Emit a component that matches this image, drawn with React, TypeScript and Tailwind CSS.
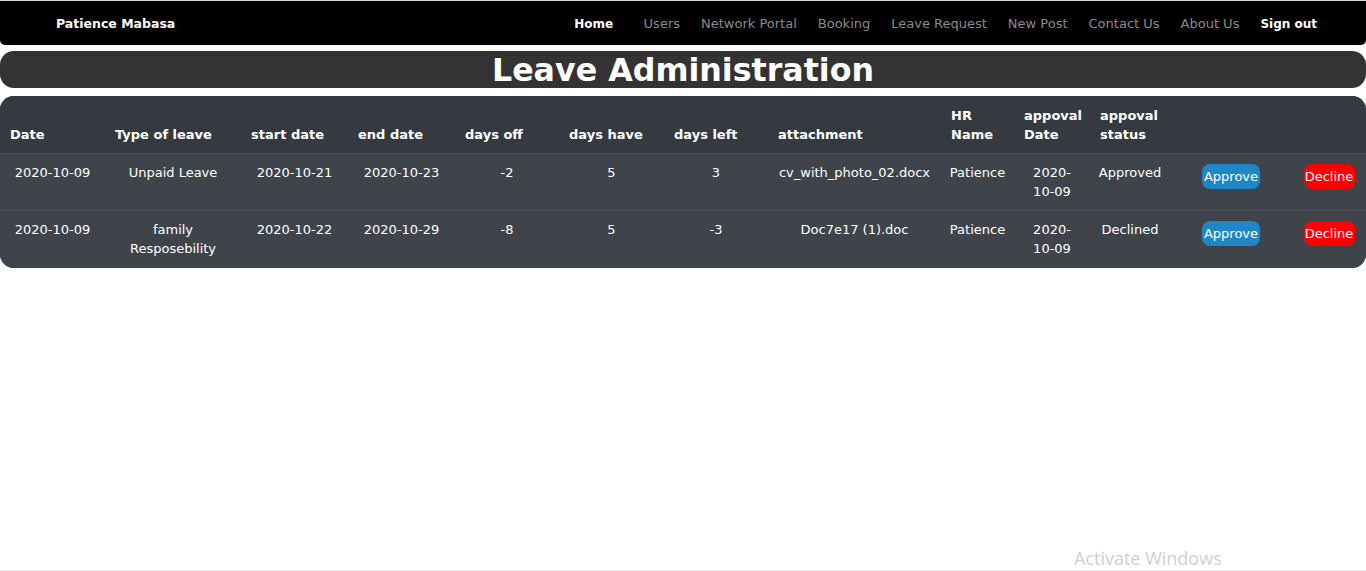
import React from "react";

const rows = [
  {
    date: "2020-10-09",
    type: ["Unpaid Leave"],
    start: "2020-10-21",
    end: "2020-10-23",
    off: "-2",
    have: "5",
    left: "3",
    att: "cv_with_photo_02.docx",
    hr: "Patience",
    status: "Approved",
  },
  {
    date: "2020-10-09",
    type: ["family", "Resposebility"],
    start: "2020-10-22",
    end: "2020-10-29",
    off: "-8",
    have: "5",
    left: "-3",
    att: "Doc7e17 (1).doc",
    hr: "Patience",
    status: "Declined",
  },
];

const widths = [105, 136, 107, 107, 104, 105, 104, 173, 73, 76, 80, 122, 74];

export default function App() {
  const navLinks = ["Users", "Network Portal", "Booking", "Leave Request", "New Post", "Contact Us", "About Us"];
  return (
    <div
      className="relative min-h-[571px] w-[1366px] overflow-hidden bg-white text-[13px] text-white"
      style={{ fontFamily: '"DejaVu Sans", Verdana, sans-serif' }}
    >
      <div className="border-t border-[#d4d4d4]">
        <nav className="flex h-[44px] items-center rounded-b-[5px] bg-black pl-[56px] pr-[49px] pt-[2px]">
          <span className="text-[12.5px] font-bold text-white">Patience Mabasa</span>
          <div className="ml-auto flex items-center">
            <span className="mr-[20px] text-[12px] font-bold text-white">Home</span>
            {navLinks.map((l) => (
              <span key={l} className="px-[10.5px] text-[#8a8a8a]">
                {l}
              </span>
            ))}
            <span className="pl-[10.5px] text-[12px] font-bold text-white">Sign out</span>
          </div>
        </nav>
      </div>

      <div className="mt-[6px] flex h-[37px] items-center justify-center rounded-[14px] bg-[#333333]">
        <h1 className="pt-[2px] text-[31.7px] font-bold leading-[37px] text-white">Leave Administration</h1>
      </div>

      <div className="mt-[8px] overflow-hidden rounded-[14px] bg-[#3f434a]">
        <table className="w-full table-fixed border-collapse">
          <colgroup>
            {widths.map((w, i) => (
              <col key={i} style={{ width: w }} />
            ))}
          </colgroup>
          <thead>
            <tr className="h-[57px] bg-[#353a40]">
              {[
                ["Date"],
                ["Type of leave"],
                ["start date"],
                ["end date"],
                ["days off"],
                ["days have"],
                ["days left"],
                ["attachment"],
                ["HR", "Name"],
                ["appoval", "Date"],
                ["appoval", "status"],
                [],
                [],
              ].map((h, i) => (
                <th key={i} className="px-[10px] pb-[9px] pt-[10px] text-left align-bottom font-bold leading-[19px]">
                  {h.map((t, j) => (
                    <div key={j}>{t}</div>
                  ))}
                </th>
              ))}
            </tr>
          </thead>
          <tbody>
            {rows.map((r, i) => (
              <tr key={i} className="h-[57px] border-t border-[#4c5158] bg-[#3f434a]">
                {[r.date, r.type, r.start, r.end, r.off, r.have, r.left, r.att, r.hr, ["2020-", "10-09"], r.status].map(
                  (c, j) => (
                    <td key={j} className="px-[8px] pb-[8px] pt-[9px] text-center align-top leading-[19px]">
                      {Array.isArray(c) ? c.map((t, k) => <div key={k}>{t}</div>) : c}
                    </td>
                  )
                )}
                <td className="pt-[10px] text-center align-top">
                  <span className="inline-flex h-[25px] w-[58px] items-center justify-center rounded-[8px] bg-[#1f87c6] text-white">
                    Approve
                  </span>
                </td>
                <td className="pt-[10px] text-center align-top">
                  <span className="inline-flex h-[25px] w-[51px] items-center justify-center rounded-[8px] bg-[#ff0000] text-white">
                    Decline
                  </span>
                </td>
              </tr>
            ))}
          </tbody>
        </table>
      </div>

      <div className="absolute bottom-0 left-0 h-px w-full bg-[#e6e6e6]" />
      <div
        className="absolute left-[1074px] top-[547px] text-[18px] leading-[22px] text-[#cfcfcf]"
        style={{ fontFamily: '"Open Sans", "Noto Sans", sans-serif' }}
      >
        Activate Windows
      </div>
    </div>
  );
}
